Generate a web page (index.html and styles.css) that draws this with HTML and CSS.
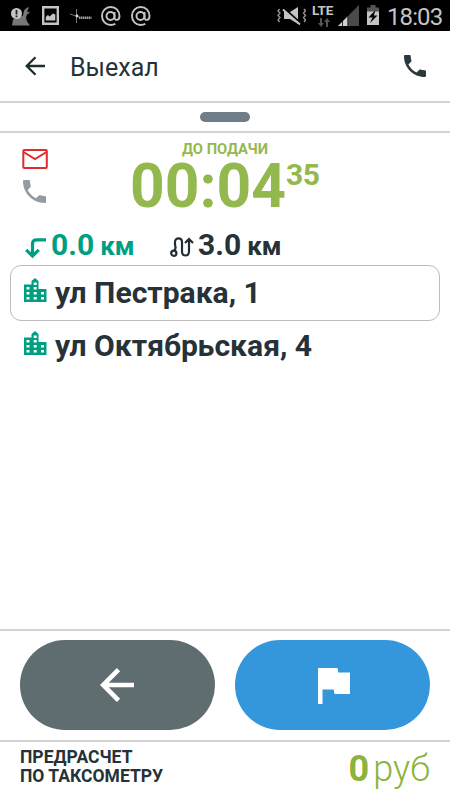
FILE: index.html
```html
<!DOCTYPE html>
<html lang="ru">
<head>
<meta charset="utf-8">
<title>Выехал</title>
<link rel="stylesheet" href="styles.css">
</head>
<body>
<div class="app">
  <div class="status">
    <div class="status-left">
      <svg width="20" height="20" viewBox="0 0 20 20"><path fill="#777" d="M1 19.500l1-6 6-2 4-2 1-5 3-3h2l-2 4 3 1-3 2-1 3 1 4 3 4z"/><circle cx="5.500" cy="7.500" r="5.500" fill="#c4c4c4"/><path d="M4.600 4h1.800v4.500H4.600zM4.600 9.500h1.800v1.700H4.600z" fill="#222"/></svg>
      <svg width="17" height="19" viewBox="0 0 17 19"><path fill="none" stroke="#c4c4c4" stroke-width="2.400" d="M1.200 1.200h14.600v16.600H1.200z"/><path fill="#c4c4c4" d="M3.800 14.500V11l2-2 2 1.500 3-3 2.500 1v6z"/></svg>
      <svg width="22" height="18" viewBox="0 0 22 18"><path stroke="#777" fill="none" d="M6.500 2v14M0 7l9 3"/><circle cx="7" cy="9" r="1.400" fill="#ddd"/><path stroke="#a0a0a0" stroke-width="2.500" stroke-dasharray="1.500 .5" d="M9 10.700h12.500"/></svg>
      <svg width="20" height="20" viewBox="0 0 20 20" class="at"><circle cx="9.500" cy="10" r="4"/><path d="M13.500 6v5.200c0 3.800 5 3.800 5-1.200 0-5-3.500-9-8.800-9A8.700 8.700 0 0 0 1 10c0 5 3.700 9 8.700 9 1.800 0 3.300-.4 4.700-1.300"/></svg>
      <svg width="20" height="20" viewBox="0 0 20 20" class="at"><circle cx="9.500" cy="10" r="4"/><path d="M13.500 6v5.200c0 3.800 5 3.800 5-1.200 0-5-3.500-9-8.800-9A8.700 8.700 0 0 0 1 10c0 5 3.700 9 8.700 9 1.800 0 3.300-.4 4.700-1.300"/></svg>
    </div>
    <div class="status-right">
      <svg class="mute" width="30" height="20" viewBox="0 0 30 20"><path fill="none" stroke="#999" stroke-width="1.300" d="M2.500 3l-1.500 2 2 2-2 2.500 2 2-2 2.500 1.500 2M27 3l1.500 2-2 2 2 2.500-2 2 2 2.500-1.500 2"/><path fill="#c4c4c4" d="M7 6h6l8-5v17l-8-5H7z"/><path stroke="#000" stroke-width="3" d="M6 2l17 15"/><path stroke="#c4c4c4" stroke-width="1.800" d="M6 3.500l17 15"/></svg>
      <div class="lte"><span>LTE</span><svg width="12" height="9" viewBox="0 0 12 9"><path fill="#555" d="M2 0h2v5h2L3 9 0 5h2zM8 9h2V4h2L9 0 6 4h2z"/></svg></div>
      <svg class="signal" width="21" height="21" viewBox="0 0 21 21"><path fill="#4a4a4a" d="M0 21L21 0v21z"/><path fill="#d0d0d0" d="M0 21L10 11v10z"/><path stroke="#000" stroke-width=".8" d="M4.500 10v11M9.800 5v16"/></svg>
      <svg class="battery" width="14" height="20" viewBox="0 0 14 20"><path fill="#555" d="M4.500 0h5v2.500H13V7H1V2.500h3.500z"/><path fill="#c4c4c4" d="M1 6.500h12V20H1z"/><path fill="#000" d="M9.500 5L2.500 12.500h4L4 18l7.500-7.500H7.800z"/></svg>
      <span class="clock">18:03</span>
    </div>
  </div>

  <header class="header">
    <svg class="back" width="20" height="20" viewBox="0 0 20 20"><path d="M20 10H2M10.500 1.200L1.700 10l8.800 8.800"/></svg>
    <h1>Выехал</h1>
    <svg class="call" width="22" height="22" viewBox="3 3 18 18"><path d="M6.620 10.790c1.440 2.830 3.760 5.140 6.590 6.590l2.200-2.200c.27-.27.67-.36 1.020-.24 1.120.37 2.330.57 3.570.57.55 0 1 .45 1 1V20c0 .55-.45 1-1 1C10.610 21 3 13.390 3 4c0-.55.45-1 1-1h3.500c.55 0 1 .45 1 1 0 1.250.2 2.450.57 3.570.11.35.03.74-.25 1.020z"/></svg>
  </header>
  <div class="drag"><div class="handle"></div></div>

  <main>
    <section class="eta">
      <div class="contacts">
        <svg width="26" height="20" viewBox="0 0 26 20"><rect x="1.300" y="1" width="23.500" height="18" rx="1" fill="none" stroke="#e32b2e" stroke-width="2"/><path fill="none" stroke="#e32b2e" stroke-width="2" d="M1.500 3l11.500 7L24.500 3"/></svg>
        <svg class="phone" width="23" height="23" viewBox="3 3 18 18"><path d="M6.620 10.790c1.440 2.830 3.760 5.140 6.590 6.590l2.200-2.200c.27-.27.67-.36 1.020-.24 1.120.37 2.330.57 3.570.57.55 0 1 .45 1 1V20c0 .55-.45 1-1 1C10.610 21 3 13.390 3 4c0-.55.45-1 1-1h3.500c.55 0 1 .45 1 1 0 1.250.2 2.450.57 3.570.11.35.03.74-.25 1.020z"/></svg>
      </div>
      <div class="timer">
        <div class="caption">ДО ПОДАЧИ</div>
        <div class="time"><span class="min">00:04</span><span class="sec">35</span></div>
      </div>
    </section>

    <section class="distances">
      <div class="dist near">
        <svg width="22" height="22" viewBox="0 0 22 22"><path fill="none" stroke="#009f82" stroke-width="3.200" d="M21 2.800h-9.500c-2.500 0-4 1.500-4 4V19M1.200 12.800l6.300 6.300 6.300-6.300"/></svg>
        <span class="num">0.0</span><span class="unit">км</span>
      </div>
      <div class="dist">
        <svg width="24" height="20" viewBox="0 0 24 20"><g fill="none" stroke="#202d33" stroke-width="2.200"><circle cx="3.800" cy="16.200" r="2.600"/><path d="M4 13.600c3-2 1-3.500 1-6.600V5.200c0-5 7-5 7 0v9.300c0 5.300 7 5.300 7 0V2.500M15 6l4-4 4 4"/></g></svg>
        <span class="num">3.0</span><span class="unit">км</span>
      </div>
    </section>

    <ul class="stops">
      <li class="stop current">
        <svg width="23" height="24" viewBox="0 0 23 24"><path fill="#009f82" fill-rule="evenodd" d="M0 6.500h7.500V3L11 0l3.500 3v8H22.500v13H0zM2.500 9v2.500h3V9zM2.500 14v2.500h3V14zM2.500 19v2.500h3V19zM9.700 4.500V7h3V4.500zM9.700 9v2.500h3V9zM9.700 14v2.500h3V14zM9.700 19v2.500h3V19zM17 14v2.500h3V14zM17 19v2.500h3V19z"/></svg>
        <span>ул Пестрака, 1</span>
      </li>
      <li class="stop">
        <svg width="23" height="24" viewBox="0 0 23 24"><path fill="#009f82" fill-rule="evenodd" d="M0 6.500h7.500V3L11 0l3.500 3v8H22.500v13H0zM2.500 9v2.500h3V9zM2.500 14v2.500h3V14zM2.500 19v2.500h3V19zM9.700 4.500V7h3V4.500zM9.700 9v2.500h3V9zM9.700 14v2.500h3V14zM9.700 19v2.500h3V19zM17 14v2.500h3V14zM17 19v2.500h3V19z"/></svg>
        <span>ул Октябрьская, 4</span>
      </li>
    </ul>
  </main>

  <div class="actions">
    <button class="btn prev" aria-label="Назад"><svg width="34" height="34" viewBox="0 0 34 34"><path fill="none" stroke="#fff" stroke-width="4.600" d="M34 17H4M18.500 1.700L3.200 17l15.300 15.300"/></svg></button>
    <button class="btn go" aria-label="На месте"><svg width="32" height="36" viewBox="0 0 32 36"><path fill="#fff" d="M0 0h19.500l.8 4.500H32V26H16.500l-.8-4.500H4.500V36H0z"/></svg></button>
  </div>

  <footer class="footer">
    <div class="label">ПРЕДРАСЧЕТ<br>ПО ТАКСОМЕТРУ</div>
    <div class="price"><b>0</b><span>руб</span></div>
  </footer>
</div>
</body>
</html>
```
FILE: styles.css
```css
* { box-sizing: border-box; }
body {
  margin: 0;
  font-family: Roboto, "Liberation Sans", sans-serif;
  color: #263238;
  background: #fff;
}
svg { display: block; flex: none; }
.app { display: flex; flex-direction: column; width: 450px; height: 800px; overflow: hidden; }

.status { display: flex; justify-content: space-between; height: 31px; background: #000; color: #c4c4c4; }
.status-left { display: flex; align-items: center; padding-left: 11px; }
.status-left svg:nth-child(2) { margin-left: 11px; }
.status-left svg:nth-child(3) { margin-left: 11px; }
.status-left svg:nth-child(4) { margin-left: 9px; }
.status-left svg:nth-child(5) { margin-left: 10px; }
.at { fill: none; stroke: #c4c4c4; stroke-width: 1.9; }
.status-right { display: flex; padding-right: 8px; }
.mute { margin-top: 6px; }
.lte { width: 22px; margin: 4px 0 0 5px; }
.lte span { display: block; font-size: 13.5px; line-height: 12px; font-weight: 700; letter-spacing: -0.2px; }
.lte svg { margin: 2px 0 0 6px; }
.signal { margin: 5px 0 0 4px; }
.battery { margin: 5px 0 0 7px; }
.clock { margin-left: 7px; width: 55px; font-size: 24px; line-height: 34px; letter-spacing: -0.9px; text-align: right; }

.header { display: flex; align-items: center; height: 72px; padding: 0 24px 0 25px; border-bottom: 2px solid #d3d3d3; }
.back { fill: none; stroke: #202d33; stroke-width: 2.3; }
.header h1 { flex: 1; margin: 4px 0 0 25px; font-size: 25px; line-height: 30px; font-weight: 400; }
.call { fill: #2b383e; }
.drag { display: flex; align-items: center; justify-content: center; height: 30px; border-bottom: 2px solid #d3d3d3; }
.handle { width: 50px; height: 10px; border-radius: 5px; background: #6f7d89; }

main { flex: 1; }
.eta { display: flex; height: 94px; color: #93b84d; }
.contacts { width: 130px; padding: 16px 0 0 22px; }
.phone { margin: 11px 0 0 1px; fill: #929ca5; }
.timer { width: 190px; }
.caption { padding-top: 7px; font-size: 14.700px; line-height: 18px; font-weight: 700; text-align: center; }
.time { display: flex; align-items: flex-start; }
.min { font-size: 60.500px; line-height: 58px; font-weight: 700; }
.sec { font-size: 30px; line-height: 34px; font-weight: 700; letter-spacing: -0.3px; }

.distances { display: flex; height: 38px; padding-left: 25px; }
.dist { display: flex; align-items: baseline; width: 145px; font-weight: 700; line-height: 36px; }
.near { color: #009f82; }
.dist svg { align-self: flex-start; margin-top: 10px; }
.num { margin-left: 4px; font-size: 30px; }
.unit { margin-left: 6px; font-size: 26px; }

.stops { list-style: none; margin: 0; padding: 0 10px; }
.stop { display: flex; height: 56px; padding: 10px 0 0 14px; font-size: 30.100px; font-weight: 700; line-height: 30px; }
.stop span { margin-left: 8px; }
.current { height: 56px; padding: 12px 0 0 13px; border: 1px solid #bdbdbd; border-radius: 11px; }

.actions { display: flex; gap: 20px; height: 111px; padding: 9px 20px 0; border-top: 2px solid #d3d3d3; }
.btn { display: flex; align-items: center; justify-content: center; width: 195px; height: 90px; padding: 0; border: 0; border-radius: 45px; }
.prev { padding-right: 2px; background: #5f6d70; }
.go { padding: 2px 0 0 2px; background: #3497db; }

.footer { display: flex; justify-content: space-between; height: 60px; padding: 0 20px; border-top: 2px solid #d3d3d3; }
.label { padding-top: 6px; font-size: 17.500px; line-height: 19px; font-weight: 700; }
.price { display: flex; color: #8bb33d; font-size: 36px; line-height: 54px; }
.price span { margin-left: 4px; font-weight: 300; }
```
